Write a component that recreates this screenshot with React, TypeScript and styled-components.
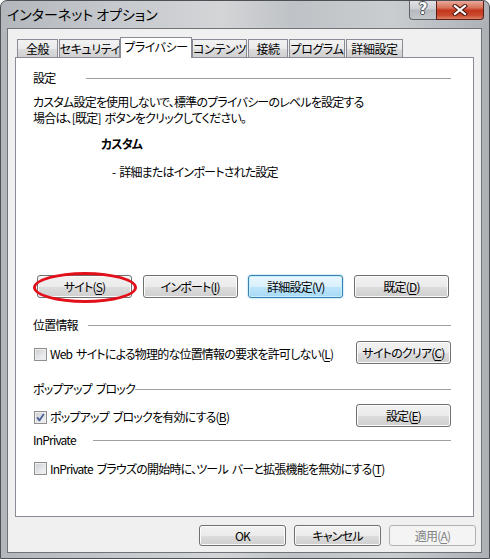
import React from 'react';
import styled, { createGlobalStyle, css } from 'styled-components';

const GlobalStyle = createGlobalStyle`
  html, body { margin: 0; padding: 0; background: #ffffff; }
  body {
    font-family: "Noto Sans CJK JP", "Noto Sans", sans-serif;
    font-size: 12px;
    color: #000;
    font-feature-settings: "palt";
    letter-spacing: -0.8px;
    word-spacing: 2px;
  }
  * { box-sizing: border-box; }
`;

const Window = styled.div`
  width: 490px;
  height: 559px;
  display: flex;
  flex-direction: column;
  border: 1px solid #4d5156;
  border-radius: 7px 7px 0 0;
  overflow: hidden;
  background: linear-gradient(
    to right,
    #b3b7bc 0%,
    #c7cace 25%,
    #d3d5d7 45%,
    #bfc2c6 60%,
    #cacdd0 80%,
    #adb1b6 100%
  );
`;

const TitleBar = styled.div`
  height: 27px;
  display: flex;
  align-items: flex-start;
  justify-content: space-between;
`;

const TitleText = styled.div`
  padding-left: 6px;
  line-height: 27px;
  font-size: 14px;
  color: #000;
  letter-spacing: 0;
  word-spacing: 0;
`;

const CaptionGroup = styled.div`
  display: flex;
  margin-top: -1px;
  margin-right: 5px;
`;

const CaptionButton = styled.div<{ $kind: 'help' | 'close' }>`
  height: 20px;
  display: flex;
  align-items: center;
  justify-content: center;
  border: 1px solid #5f6368;
  border-top: none;
  ${(p) =>
    p.$kind === 'help'
      ? css`
          width: 27px;
          border-right: none;
          border-radius: 0 0 0 4px;
          background: linear-gradient(#e3e5e8 0%, #cdd0d4 45%, #b6babf 55%, #c3c6ca 100%);
        `
      : css`
          width: 48px;
          border-color: #5b2116;
          border-radius: 0 0 4px 0;
          background: linear-gradient(#eab2a4 0%, #d9735c 40%, #c3371d 55%, #c8482e 80%, #dd8366 100%);
        `}
`;

const HelpGlyph = styled.span`
  font-family: "DejaVu Sans", sans-serif;
  font-weight: bold;
  font-size: 15px;
  line-height: 1;
  letter-spacing: 0;
  color: #ffffff;
  text-shadow: -1px 0 #4a4f55, 1px 0 #4a4f55, 0 -1px #4a4f55, 0 1px #4a4f55;
`;

const Client = styled.div`
  margin: 0 7px 5px 6px;
  flex: 1;
  border: 1px solid #6f7479;
  background: #f0f0f0;
  display: flex;
  flex-direction: column;
`;

const TabStrip = styled.div`
  height: 28px;
  padding-left: 9px;
  display: flex;
  align-items: flex-end;
  gap: 1px;
  position: relative;
  z-index: 1;
`;

const Tab = styled.div<{ $w: number; $active?: boolean }>`
  width: ${(p) => p.$w}px;
  height: 18px;
  border: 1px solid #898c95;
  border-bottom: none;
  display: flex;
  align-items: center;
  justify-content: center;
  font-size: 12px;
  letter-spacing: -0.4px;
  line-height: 1;
  white-space: nowrap;
  background: linear-gradient(#f2f2f2 0%, #ebebeb 50%, #dddddd 51%, #cfcfcf 100%);
  ${(p) =>
    p.$active &&
    css`
      height: 21px;
      margin: 0 -1px -1px -1px;
      padding-bottom: 2px;
      background: #ffffff;
    `}
`;

const Panel = styled.div`
  margin-left: 7px;
  width: 459px;
  height: 460px;
  border: 1px solid #898c95;
  background: #ffffff;
  padding: 12px 22px 0 17px;
  display: flex;
  flex-direction: column;
`;

const GroupHeader = styled.div<{ $mt: number }>`
  display: flex;
  align-items: center;
  height: 16px;
  margin-top: ${(p) => p.$mt}px;
`;

const GroupLabel = styled.div<{ $w: number }>`
  min-width: ${(p) => p.$w}px;
  flex: none;
  line-height: 16px;
  white-space: nowrap;
`;

const GroupLine = styled.div`
  flex: 1;
  height: 1px;
  margin-top: 1px;
  background: #a0a0a0;
`;

const TextBlock = styled.div<{ $mt: number; $indent?: number; $bold?: boolean }>`
  margin-top: ${(p) => p.$mt}px;
  padding-left: ${(p) => p.$indent ?? 0}px;
  line-height: 16px;
  font-weight: ${(p) => (p.$bold ? 700 : 400)};
  white-space: nowrap;
`;

const ButtonRow = styled.div<{ $mt: number }>`
  margin: ${(p) => p.$mt}px 2px 0 4px;
  display: flex;
  justify-content: space-between;
`;

const Button = styled.div<{ $w?: number; $h?: number; $focused?: boolean; $disabled?: boolean }>`
  position: relative;
  width: ${(p) => p.$w ?? 95}px;
  height: ${(p) => p.$h ?? 23}px;
  border: 1px solid #707070;
  border-radius: 3px;
  display: flex;
  align-items: center;
  justify-content: center;
  font-size: 12px;
  line-height: 1;
  white-space: nowrap;
  box-shadow: inset 0 0 0 1px #fbfbfb;
  background: linear-gradient(#f2f2f2 0%, #ebebeb 50%, #dddddd 51%, #cfcfcf 100%);
  ${(p) =>
    p.$focused &&
    css`
      border-color: #3c7fb1;
      box-shadow: inset 0 0 0 1px #c4f0ff, 0 0 2px #6fc4ef;
      background: linear-gradient(#eaf6fd 0%, #d9f0fc 50%, #bee6fd 51%, #a7d9f5 100%);
    `}
  ${(p) =>
    p.$disabled &&
    css`
      border-color: #adb2b5;
      color: #838383;
      background: #f4f4f4;
      box-shadow: none;
    `}
`;

const Key = styled.span`
  text-decoration: underline;
  text-underline-offset: 2px;
`;

const Highlight = styled.div`
  position: absolute;
  left: -5px;
  top: -4px;
  width: 104px;
  height: 31px;
  border: 3px solid #e3101b;
  border-radius: 50%;
  pointer-events: none;
`;

const OptionRow = styled.div<{ $mt: number; $h: number }>`
  margin-top: ${(p) => p.$mt}px;
  height: ${(p) => p.$h}px;
  display: flex;
  align-items: center;
  justify-content: space-between;
`;

const CheckLabel = styled.label`
  display: flex;
  align-items: center;
  gap: 3px;
  margin-left: 1px;
  margin-top: 3px;
  line-height: 16px;
  white-space: nowrap;
`;

const CheckText = styled.span`
  display: block;
`;

const CheckBoxBox = styled.span`
  width: 13px;
  height: 13px;
  flex: none;
  display: block;
`;

const Footer = styled.div`
  margin-top: 8px;
  padding-right: 5px;
  display: flex;
  justify-content: flex-end;
  gap: 8px;
`;

function CheckBox({ checked }: { checked?: boolean }) {
  const id = checked ? 'cbg1' : 'cbg0';
  return (
    <CheckBoxBox>
      <svg width="13" height="13" viewBox="0 0 13 13">
        <defs>
          <linearGradient id={id} x1="0" y1="0" x2="1" y2="1">
            <stop offset="0" stopColor="#cbcfd5" />
            <stop offset="1" stopColor="#f7f7f7" />
          </linearGradient>
        </defs>
        <rect x="0.5" y="0.5" width="12" height="12" fill="#f4f4f4" stroke="#8e8f8f" />
        <rect x="2" y="2" width="9" height="9" fill={`url(#${id})`} stroke="#dcdcdc" strokeWidth="0.6" />
        {checked && (
          <path d="M3.2 6.4 L5.4 9.4 L9.8 3" fill="none" stroke="#4a5f99" strokeWidth="1.8" strokeLinejoin="round" />
        )}
      </svg>
    </CheckBoxBox>
  );
}

function CloseGlyph() {
  return (
    <svg width="16" height="12" viewBox="0 0 16 12">
      <path d="M3 2 L13 10 M13 2 L3 10" stroke="#4e1a12" strokeWidth="4.2" strokeLinecap="square" />
      <path d="M3 2 L13 10 M13 2 L3 10" stroke="#ffffff" strokeWidth="2.2" strokeLinecap="square" />
    </svg>
  );
}

const tabs: { label: string; w: number; active?: boolean }[] = [
  { label: '全般', w: 41 },
  { label: 'セキュリティ', w: 61 },
  { label: 'プライバシー', w: 72, active: true },
  { label: 'コンテンツ', w: 55 },
  { label: '接続', w: 40 },
  { label: 'プログラム', w: 56 },
  { label: '詳細設定', w: 57 },
];

export default function App() {
  return (
    <>
      <GlobalStyle />
      <Window>
        <TitleBar>
          <TitleText>インターネット オプション</TitleText>
          <CaptionGroup>
            <CaptionButton $kind="help">
              <HelpGlyph>?</HelpGlyph>
            </CaptionButton>
            <CaptionButton $kind="close">
              <CloseGlyph />
            </CaptionButton>
          </CaptionGroup>
        </TitleBar>
        <Client>
          <TabStrip>
            {tabs.map((t) => (
              <Tab key={t.label} $w={t.w} $active={t.active}>
                {t.label}
              </Tab>
            ))}
          </TabStrip>
          <Panel>
            <GroupHeader $mt={0}>
              <GroupLabel $w={53}>設定</GroupLabel>
              <GroupLine />
            </GroupHeader>
            <TextBlock $mt={8}>
              カスタム設定を使用しないで、標準のプライバシーのレベルを設定する
              <br />
              場合は、[既定] ボタンをクリックしてください。
            </TextBlock>
            <TextBlock $mt={10} $indent={68} $bold>
              カスタム
            </TextBlock>
            <TextBlock $mt={12} $indent={79}>
              - 詳細またはインポートされた設定
            </TextBlock>
            <ButtonRow $mt={95}>
              <Button>
                サイト(<Key>S</Key>)
                <Highlight />
              </Button>
              <Button>
                インポート(<Key>I</Key>)
              </Button>
              <Button $focused>詳細設定(V)</Button>
              <Button>
                既定(<Key>D</Key>)
              </Button>
            </ButtonRow>
            <GroupHeader $mt={19}>
              <GroupLabel $w={55}>位置情報</GroupLabel>
              <GroupLine />
            </GroupHeader>
            <OptionRow $mt={8} $h={23}>
              <CheckLabel>
                <CheckBox />
                <CheckText>
                  Web サイトによる物理的な位置情報の要求を許可しない(<Key>L</Key>)
                </CheckText>
              </CheckLabel>
              <Button $w={95} $h={23}>
                サイトのクリア(<Key>C</Key>)
              </Button>
            </OptionRow>
            <GroupHeader $mt={17}>
              <GroupLabel $w={89}>ポップアップ ブロック</GroupLabel>
              <GroupLine />
            </GroupHeader>
            <OptionRow $mt={7} $h={23}>
              <CheckLabel>
                <CheckBox checked />
                <CheckText>
                  ポップアップ ブロックを有効にする(<Key>B</Key>)
                </CheckText>
              </CheckLabel>
              <Button $w={95} $h={23}>
                設定(<Key>E</Key>)
              </Button>
            </OptionRow>
            <GroupHeader $mt={5}>
              <GroupLabel $w={60}>InPrivate</GroupLabel>
              <GroupLine />
            </GroupHeader>
            <OptionRow $mt={11} $h={16}>
              <CheckLabel>
                <CheckBox />
                <CheckText>
                  InPrivate ブラウズの開始時に、ツール バーと拡張機能を無効にする(<Key>T</Key>)
                </CheckText>
              </CheckLabel>
            </OptionRow>
          </Panel>
          <Footer>
            <Button $w={87} $h={21}>OK</Button>
            <Button $w={87} $h={21}>キャンセル</Button>
            <Button $w={87} $h={21} $disabled>
              適用(<Key>A</Key>)
            </Button>
          </Footer>
        </Client>
      </Window>
    </>
  );
}
